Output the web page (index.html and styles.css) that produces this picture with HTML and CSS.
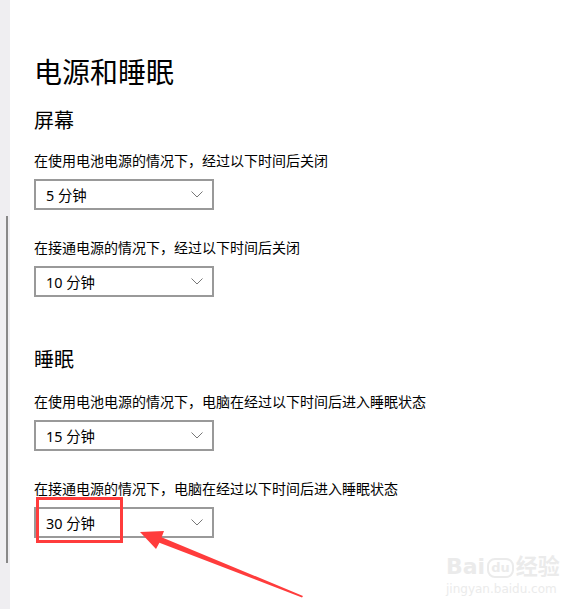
FILE: index.html
```html
<!DOCTYPE html>
<html lang="zh-CN">
<head>
    <meta charset="UTF-8">
    <title>电源和睡眠</title>
    <link rel="stylesheet" href="styles.css">
</head>
<body>
    <div class="page">
        <aside class="side">
            <div class="scrollbar"></div>
        </aside>

        <main class="content">
            <h1>电源和睡眠</h1>

            <h2 class="screen-title">屏幕</h2>
            <p class="label">在使用电池电源的情况下，经过以下时间后关闭</p>
            <div class="select">
                <span>5 分钟</span>
                <svg class="chevron" width="12" height="7" viewBox="0 0 12 7"><path d="M0.5 0.5 L6 6 L11.5 0.5" fill="none" stroke="#777" stroke-width="1"/></svg>
            </div>

            <p class="label gap">在接通电源的情况下，经过以下时间后关闭</p>
            <div class="select">
                <span>10 分钟</span>
                <svg class="chevron" width="12" height="7" viewBox="0 0 12 7"><path d="M0.5 0.5 L6 6 L11.5 0.5" fill="none" stroke="#777" stroke-width="1"/></svg>
            </div>

            <h2 class="sleep-title">睡眠</h2>
            <p class="label">在使用电池电源的情况下，电脑在经过以下时间后进入睡眠状态</p>
            <div class="select">
                <span>15 分钟</span>
                <svg class="chevron" width="12" height="7" viewBox="0 0 12 7"><path d="M0.5 0.5 L6 6 L11.5 0.5" fill="none" stroke="#777" stroke-width="1"/></svg>
            </div>

            <p class="label gap">在接通电源的情况下，电脑在经过以下时间后进入睡眠状态</p>
            <div class="select">
                <span>30 分钟</span>
                <svg class="chevron" width="12" height="7" viewBox="0 0 12 7"><path d="M0.5 0.5 L6 6 L11.5 0.5" fill="none" stroke="#777" stroke-width="1"/></svg>
            </div>
        </main>

        <!-- annotation drawn over the screenshot -->
        <div class="mark-box"></div>
        <svg class="mark-arrow" width="582" height="609" viewBox="0 0 582 609">
            <polygon points="140,532 164,531 161.6,537.2 303,596 302,597.5 159.4,542.8 156,549" fill="#ff3c3c"/>
        </svg>

        <div class="watermark">
            <div class="wm-top">Bai<span class="wm-du">du</span>经验</div>
            <div class="wm-url">jingyan.baidu.com</div>
        </div>
    </div>
</body>
</html>
```

FILE: styles.css
```css
* {
    margin: 0;
    padding: 0;
    box-sizing: border-box;
}

body {
    background-color: #fff;
    color: #000;
    font-family: 'Noto Sans', 'Noto Sans CJK SC', sans-serif;
    overflow: hidden;
}

.page {
    position: relative;
    display: flex;
    width: 582px;
    height: 609px;
}

.side {
    width: 10px;
    background-color: #efeef1;
    padding-top: 216px;
}

.scrollbar {
    width: 2px;
    height: 347px;
    margin-left: 6px;
    background-color: #888;
}

.content {
    padding-left: 24px;
    padding-top: 54px;
}

h1 {
    font-size: 28px;
    font-weight: 400;
    line-height: 36px;
}

h2 {
    font-size: 20px;
    font-weight: 400;
    line-height: 28px;
}

.screen-title {
    margin-top: 17px;
}

.sleep-title {
    margin-top: 49px;
}

.label {
    font-size: 14px;
    line-height: 20px;
    margin-top: 16px;
    white-space: nowrap;
}

.sleep-title + .label {
    margin-top: 18px;
}

.label.gap {
    margin-top: 28px;
}

.select {
    display: flex;
    align-items: center;
    justify-content: space-between;
    width: 180px;
    height: 31px;
    margin-top: 8px;
    padding: 0 9px 0 10px;
    border: 2px solid #999;
    font-size: 14.4px;
}

.chevron {
    display: block;
}

.mark-box {
    position: absolute;
    left: 36px;
    top: 497px;
    width: 87px;
    height: 46px;
    border: 3px solid #ff3c3c;
}

.mark-arrow {
    position: absolute;
    left: 0;
    top: 0;
}

.watermark {
    position: absolute;
    left: 446px;
    top: 554px;
    color: #ebebeb;
    font-family: 'DejaVu Sans', 'Noto Sans CJK SC', sans-serif;
}

.wm-top {
    font-size: 22px;
    line-height: 26px;
    font-weight: 700;
}

.wm-du {
    display: inline-block;
    font-size: 13px;
    line-height: 14px;
    padding: 1px 2px;
    margin: 0 2px;
    border: 2px solid #ebebeb;
    border-radius: 8px;
    vertical-align: middle;
}

.wm-url {
    font-size: 12px;
    line-height: 18px;
}
```
